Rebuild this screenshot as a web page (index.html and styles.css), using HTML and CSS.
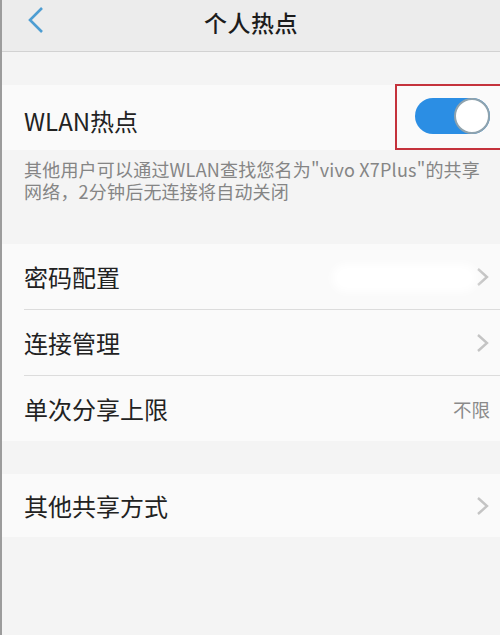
FILE: index.html
```html
<!DOCTYPE html>
<html lang="zh-CN">
<head>
<meta charset="utf-8">
<title>个人热点</title>
<link rel="stylesheet" href="styles.css">
</head>
<body>
<div class="screen">
  <header class="topbar">
    <svg class="back" width="18" height="28" viewBox="0 0 18 28"><polyline points="15,2 3,14 15,26" fill="none" stroke="#4d9dd2" stroke-width="2.6" stroke-linejoin="miter"/></svg>
    <h1 class="title">个人热点</h1>
  </header>

  <div class="gap"></div>

  <div class="row row-wlan">
    <span class="label">WLAN热点</span>
    <div class="toggle"><div class="knob"></div></div>
    <div class="highlight"></div>
  </div>

  <p class="desc">其他用户可以通过WLAN查找您名为"vivo X7Plus"的共享<br>网络，2分钟后无连接将自动关闭</p>

  <div class="group">
    <div class="row">
      <span class="label">密码配置</span>
      <div class="smudge"></div>
      <svg class="chev" width="14" height="20" viewBox="0 0 14 20"><polyline points="2,2 11,10 2,18" fill="none" stroke="#c4c4c4" stroke-width="2.4"/></svg>
    </div>
    <div class="sep"></div>
    <div class="row">
      <span class="label">连接管理</span>
      <svg class="chev" width="14" height="20" viewBox="0 0 14 20"><polyline points="2,2 11,10 2,18" fill="none" stroke="#c4c4c4" stroke-width="2.4"/></svg>
    </div>
    <div class="sep"></div>
    <div class="row">
      <span class="label">单次分享上限</span>
      <span class="value">不限</span>
    </div>
  </div>

  <div class="gap"></div>

  <div class="group">
    <div class="row row-last">
      <span class="label">其他共享方式</span>
      <svg class="chev" width="14" height="20" viewBox="0 0 14 20"><polyline points="2,2 11,10 2,18" fill="none" stroke="#c4c4c4" stroke-width="2.4"/></svg>
    </div>
  </div>
</div>
</body>
</html>
```

FILE: styles.css
```css
html, body {
  margin: 0;
  padding: 0;
  width: 500px;
  height: 635px;
  overflow: hidden;
  background: #f4f4f4;
}

.screen {
  width: 498px;
  height: 635px;
  border-left: 2px solid #9c9c9c;
  background: #f4f4f4;
  font-family: "Noto Sans CJK SC", "Noto Sans", sans-serif;
  color: #222;
  overflow: hidden;
}

.topbar {
  height: 51px;
  background: #ececec;
  border-bottom: 1px solid #d2d2d2;
  display: flex;
  align-items: center;
  justify-content: center;
  position: relative;
}

.back {
  position: absolute;
  left: 25px;
  top: 6px;
}

.title {
  margin: 0;
  margin-top: -8px;
  font-size: 23px;
  font-weight: 500;
  color: #1c1c1c;
  letter-spacing: 0.5px;
}

.gap {
  height: 33px;
}

.row {
  height: 65px;
  background: #fafafa;
  display: flex;
  align-items: center;
  padding: 0 10px 0 22px;
  position: relative;
}

.row-wlan {
  padding-top: 6px;
  height: 59px;
}

.row-last {
  height: 63px;
}

.label {
  font-size: 24px;
  flex: 1;
  line-height: 1;
}

.toggle {
  width: 75px;
  height: 36px;
  border-radius: 18px;
  background: #2b8ee4;
  margin-top: -10px;
  margin-right: 0;
  position: relative;
}

.knob {
  position: absolute;
  right: 0;
  top: 0;
  width: 32px;
  height: 32px;
  border-radius: 50%;
  background: #fff;
  border: 2px solid #8fa3ae;
}

.highlight {
  position: absolute;
  left: 393px;
  top: -1px;
  width: 120px;
  height: 62px;
  border: 2px solid #c4323c;
}

.desc {
  margin: 0;
  height: 94px;
  box-sizing: border-box;
  padding: 8px 0 0 22px;
  font-size: 18px;
  line-height: 22px;
  letter-spacing: 0.2px;
  color: #858585;
}

.sep {
  height: 1px;
  margin-left: 22px;
  background: #dcdcdc;
}

.group {
  background: #fafafa;
}

.chev {
  flex: none;
  margin-right: 0;
}

.value {
  font-size: 18.5px;
  color: #8a8a8a;
  margin-right: 0;
}

.smudge {
  position: absolute;
  left: 330px;
  top: 20px;
  width: 145px;
  height: 28px;
  border-radius: 14px;
  background: #ffffff;
  filter: blur(4px);
}
```
